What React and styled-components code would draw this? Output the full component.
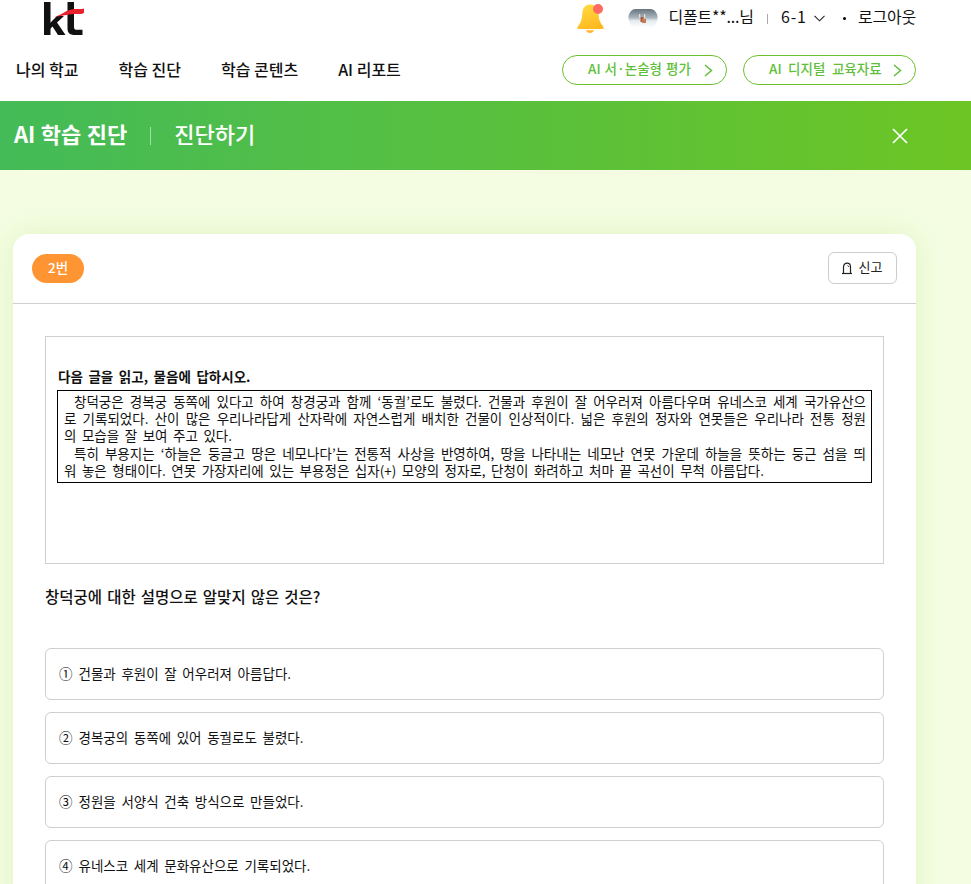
import React from "react";
import styled, { createGlobalStyle } from "styled-components";

const Global = createGlobalStyle`
  html, body { margin: 0; padding: 0; background: #f4fde2; }
  body { font-family: "Noto Sans CJK KR", "Noto Sans", sans-serif; color: #000; }
  * { box-sizing: border-box; }
`;

const Page = styled.div`
  width: 971px;
  height: 884px;
  overflow: hidden;
  display: flex;
  flex-direction: column;
`;

const TopBar = styled.header`
  flex: none;
  background: #fff;
  height: 101px;
  padding: 0 55px 0 16px;
  display: flex;
  flex-direction: column;
`;

const UtilityRow = styled.div`
  height: 37px;
  display: flex;
  align-items: center;
  justify-content: space-between;
  padding-left: 28px;
`;

const UserArea = styled.div`
  display: flex;
  align-items: center;
  font-size: 16px;
  line-height: 1;
  color: #111;
`;

const UserText = styled.span`
  margin-bottom: 5px;
  letter-spacing: ${(p) => p.$spacing || "-0.2px"};
`;

const BellWrap = styled.span`
  display: flex;
  margin-right: 23px;
`;

const Avatar = styled.span`
  display: flex;
  margin-right: 11px;
`;

const Divider = styled.span`
  width: 1px;
  height: 10px;
  background: #aaa;
  margin: 0 13px 0 13px;
`;

const GradeChevron = styled.span`
  display: flex;
  margin: 0 18px 0 7px;
`;

const Dot = styled.span`
  width: 3px;
  height: 3px;
  border-radius: 50%;
  background: #000;
  margin: 0 12px 0 0;
`;

const NavRow = styled.div`
  flex: 1;
  display: flex;
  align-items: flex-start;
  justify-content: space-between;
  padding-top: 18px;
`;

const NavList = styled.nav`
  display: flex;
  gap: 40px;
`;

const NavItem = styled.a`
  font-size: 16px;
  font-weight: 500;
  line-height: 28px;
  color: #111;
`;

const PillGroup = styled.div`
  display: flex;
  gap: 16px;
`;

const Pill = styled.a`
  height: 30px;
  width: ${(p) => p.$w}px;
  border: 1px solid #6cc12c;
  border-radius: 15px;
  color: #5fbf3c;
  font-size: 13.5px;
  font-weight: 500;
  word-spacing: ${(p) => p.$wordGap}px;
  display: flex;
  align-items: center;
  justify-content: space-between;
  padding: 0 13px 5px 25px;
`;

const PillArrow = styled.span`
  display: flex;
  margin-top: 5px;
`;

const Banner = styled.div`
  flex: none;
  height: 69px;
  background: linear-gradient(90deg, #44bb58 0%, #6cc524 100%);
  color: #fff;
  display: flex;
  align-items: center;
  padding: 0 63px 0 14px;
`;

const BannerTitle = styled.h1`
  margin: 0 0 5px;
  font-size: 22px;
  font-weight: 700;
  word-spacing: 0.5px;
  line-height: 1;
`;

const BannerSep = styled.span`
  width: 1px;
  height: 18px;
  background: rgba(255, 255, 255, 0.5);
  margin: 0 23px 0 23px;
`;

const BannerSub = styled.h2`
  margin: 0 0 5px;
  font-size: 22px;
  font-weight: 500;
  line-height: 1;
  flex: 1;
`;

const Stage = styled.main`
  flex: none;
  padding: 64px 55px 0 13px;
`;

const Card = styled.section`
  background: #fff;
  border-radius: 16px 16px 0 0;
  box-shadow: 0 0 28px rgba(120, 190, 30, 0.16);
  min-height: 800px;
`;

const CardHead = styled.div`
  height: 70px;
  padding: 20px 19px 0 19px;
  border-bottom: 1px solid #cfcfcf;
  display: flex;
  justify-content: space-between;
  align-items: flex-start;
`;

const Badge = styled.span`
  width: 52px;
  height: 29px;
  padding-bottom: 4px;
  border-radius: 15px;
  background: #ff9532;
  color: #fff;
  font-size: 13.5px;
  font-weight: 500;
  display: flex;
  align-items: center;
  justify-content: center;
`;

const ReportButton = styled.button`
  width: 69px;
  height: 32px;
  margin-top: -2px;
  border: 1px solid #ccc;
  border-radius: 6px;
  background: #fff;
  font: 400 13px "Noto Sans CJK KR", sans-serif;
  color: #222;
  display: flex;
  align-items: center;
  justify-content: center;
  gap: 6px;
  padding: 0 2px 0 0;
`;

const ReportLabel = styled.span`
  margin-bottom: 4px;
`;

const CardBody = styled.div`
  padding: 32px 32px 0;
`;

const PassageFrame = styled.div`
  height: 228px;
  border: 1px solid #cfcfcf;
  padding: 31px 11px 0;
`;

const PassageTitle = styled.p`
  margin: 0 0 5px;
  padding-left: 1px;
  font-size: 13.5px;
  font-weight: 700;
  word-spacing: 2.5px;
  line-height: 17px;
  color: #111;
`;

const PassageBox = styled.div`
  border: 1px solid #000;
  padding: 2px 5px 3px 6px;
  font-size: 13.5px;
  word-spacing: 2.5px;
  line-height: 17.2px;
  color: #111;
`;

const PassageLine = styled.div`
  white-space: nowrap;
  text-align: justify;
  text-align-last: ${(p) => (p.$fit ? "justify" : "left")};
  padding-left: ${(p) => (p.$indent ? 10 : 0)}px;
`;

const Question = styled.h3`
  margin: 21px 0 41px;
  font-size: 15.5px;
  font-weight: 500;
  word-spacing: 1.6px;
  line-height: 22px;
  color: #111;
`;

const OptionList = styled.ol`
  list-style: none;
  margin: 0;
  padding: 0;
  display: flex;
  flex-direction: column;
  gap: 12px;
`;

const Option = styled.li`
  height: 52px;
  border: 1px solid #cfcfcf;
  border-radius: 6px;
  padding: 0 13px 3px;
  display: flex;
  align-items: center;
  gap: 6px;
  font-size: 13.5px;
  word-spacing: 2.6px;
  color: #111;
`;

const Chevron = () => (
  <svg width="9" height="13" viewBox="0 0 9 13" fill="none" stroke="#5fbf3c" strokeWidth="1.5">
    <path d="M1 1 L7.5 6.5 L1 12" />
  </svg>
);

const Bell = () => (
  <svg width="28" height="29" viewBox="0 0 28 29">
    <defs>
      <linearGradient id="bellG" x1="0.3" y1="0" x2="0.7" y2="1">
        <stop offset="0" stopColor="#ffd93f" />
        <stop offset="1" stopColor="#ffb71e" />
      </linearGradient>
    </defs>
    <path d="M13 0.5 C7.5 0.5 5.5 5 5.2 10 C5 16 3.5 19 0.5 23 C0 24 .5 25 1.5 25 H25.5 C26.5 25 27 24 26.5 23 C23.5 19 21.8 16 21.5 10 C21.2 5 18.5 0.5 13 0.5 Z" fill="url(#bellG)" />
    <path d="M9 26.2 H17 C16.3 28 15 29 13 29 C11 29 9.7 28 9 26.2 Z" fill="#ffb62b" />
    <circle cx="21" cy="5" r="5" fill="#ff6a63" />
  </svg>
);

const AvatarArt = () => (
  <svg width="30" height="19" viewBox="0 0 30 19">
    <defs>
      <linearGradient id="sky" x1="0" y1="0" x2="0" y2="1">
        <stop offset="0" stopColor="#66747f" />
        <stop offset="0.45" stopColor="#aab4ba" />
        <stop offset="0.62" stopColor="#e4ebef" />
        <stop offset="1" stopColor="#ffffff" />
      </linearGradient>
    </defs>
    <path d="M0.5 7 C1.5 3 4 0 7.5 0 H22.5 C26 0 28.5 3 29.5 7 C30 11 28 16 24.5 19 H5.5 C2 16 0 11 0.5 7 Z" fill="url(#sky)" />
    <rect x="12.5" y="8" width="3" height="5" fill="#a7583a" />
    <rect x="14" y="10" width="4" height="4" fill="#c47a52" />
    <rect x="11" y="5" width="1.2" height="4" fill="#e9dcd3" />
    <rect x="16" y="5" width="1.2" height="4" fill="#e9dcd3" />
  </svg>
);

const Logo = () => (
  <svg width="40" height="33" viewBox="0 0 40 33">
    <rect x="0" y="0" width="6.5" height="33" fill="#111" />
    <path d="M6 21 L13 14 H20 L13 20.5 L21.5 33 H14 L8.5 24.5 L6 27 Z" fill="#111" />
    <path d="M23.5 0 H30 V25 C30 27 31 27.8 33 27.8 H38.5 V33 H31 C26 33 23.5 31 23.5 26.5 Z" fill="#111" />
    <path d="M10.5 14.5 C18 13.5 22 7.5 30 7 C34 6.8 37 7.6 40 6.5 V11 C37 12.5 34 12 30 12 C23 12.2 18 14.5 10.5 14.5 Z" fill="#e8212e" />
  </svg>
);

const ReportIcon = () => (
  <svg width="12" height="13" viewBox="0 0 12 13" fill="none" stroke="#222" strokeWidth="1.2">
    <path d="M2.5 11 V5 C2.5 2.8 4 1.2 6 1.2 C8 1.2 9.5 2.8 9.5 5 V11" />
    <path d="M1 11.5 H11" />
    <path d="M6.5 3.5 C7.3 3.8 7.7 4.3 7.8 5" strokeWidth="0.9" />
  </svg>
);

const lines = [
  { text: "창덕궁은 경복궁 동쪽에 있다고 하여 창경궁과 함께 ‘동궐’로도 불렸다. 건물과 후원이 잘 어우러져 아름다우며 유네스코 세계 국가유산으", indent: true, fit: true },
  { text: "로 기록되었다. 산이 많은 우리나라답게 산자락에 자연스럽게 배치한 건물이 인상적이다. 넓은 후원의 정자와 연못들은 우리나라 전통 정원", fit: true },
  { text: "의 모습을 잘 보여 주고 있다." },
  { text: "특히 부용지는 ‘하늘은 둥글고 땅은 네모나다’는 전통적 사상을 반영하여, 땅을 나타내는 네모난 연못 가운데 하늘을 뜻하는 둥근 섬을 띄", indent: true, fit: true },
  { text: "워 놓은 형태이다. 연못 가장자리에 있는 부용정은 십자(+) 모양의 정자로, 단청이 화려하고 처마 끝 곡선이 무척 아름답다." },
];

const options = [
  ["①", "건물과 후원이 잘 어우러져 아름답다."],
  ["②", "경복궁의 동쪽에 있어 동궐로도 불렸다."],
  ["③", "정원을 서양식 건축 방식으로 만들었다."],
  ["④", "유네스코 세계 문화유산으로 기록되었다."],
];

export default function App() {
  return (
    <Page>
      <Global />
      <TopBar>
        <UtilityRow>
          <Logo />
          <UserArea>
            <BellWrap><Bell /></BellWrap>
            <Avatar><AvatarArt /></Avatar>
            <UserText>디폴트**...님</UserText>
            <Divider />
            <UserText $spacing="0.9px">6-1</UserText>
            <GradeChevron>
              <svg width="11" height="7" viewBox="0 0 11 7" fill="none" stroke="#222" strokeWidth="1.1"><path d="M0.5 0.8 L5.5 5.8 L10.5 0.8" /></svg>
            </GradeChevron>
            <Dot />
            <UserText>로그아웃</UserText>
          </UserArea>
        </UtilityRow>
        <NavRow>
          <NavList>
            <NavItem>나의 학교</NavItem>
            <NavItem>학습 진단</NavItem>
            <NavItem>학습 콘텐츠</NavItem>
            <NavItem>AI 리포트</NavItem>
          </NavList>
          <PillGroup>
            <Pill $w={165} $wordGap={1}>AI 서·논술형 평가<PillArrow><Chevron /></PillArrow></Pill>
            <Pill $w={173} $wordGap={3.5}>AI 디지털 교육자료<PillArrow><Chevron /></PillArrow></Pill>
          </PillGroup>
        </NavRow>
      </TopBar>
      <Banner>
        <BannerTitle>AI 학습 진단</BannerTitle>
        <BannerSep />
        <BannerSub>진단하기</BannerSub>
        <svg width="16" height="16" viewBox="0 0 16 16" stroke="#fff" strokeWidth="1.7" fill="none"><path d="M1 1 L15 15 M15 1 L1 15" /></svg>
      </Banner>
      <Stage>
        <Card>
          <CardHead>
            <Badge>2번</Badge>
            <ReportButton><ReportIcon /><ReportLabel>신고</ReportLabel></ReportButton>
          </CardHead>
          <CardBody>
            <PassageFrame>
              <PassageTitle>다음 글을 읽고, 물음에 답하시오.</PassageTitle>
              <PassageBox>
                {lines.map((l) => (
                  <PassageLine key={l.text} $indent={l.indent} $fit={l.fit}>{l.text}</PassageLine>
                ))}
              </PassageBox>
            </PassageFrame>
            <Question>창덕궁에 대한 설명으로 알맞지 않은 것은?</Question>
            <OptionList>
              {options.map(([n, t]) => <Option key={n}><span>{n}</span><span>{t}</span></Option>)}
            </OptionList>
          </CardBody>
        </Card>
      </Stage>
    </Page>
  );
}
